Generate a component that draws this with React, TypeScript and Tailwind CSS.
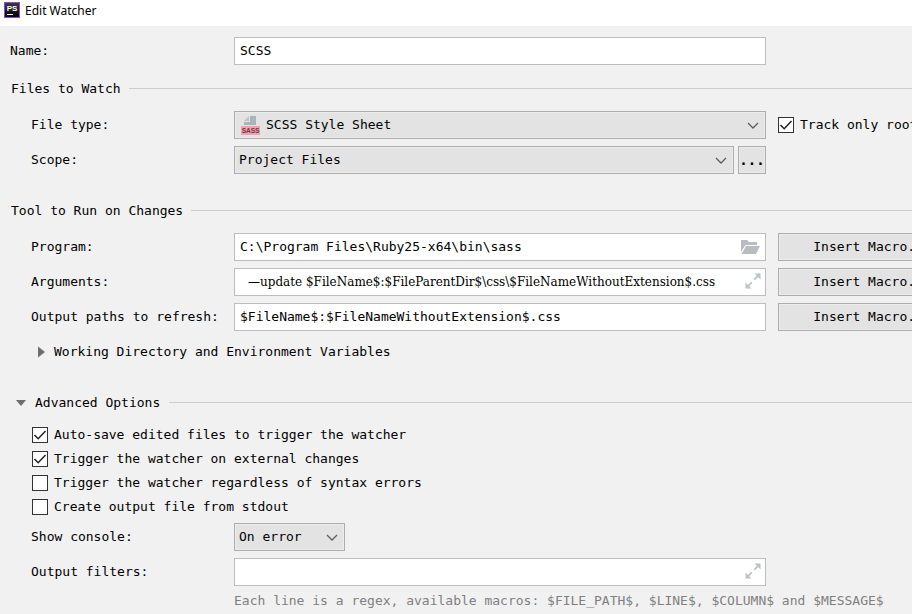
import { useState, type ReactNode } from "react";

const field =
  "h-7 w-full rounded-none border border-[#bdbdbd] bg-white px-[5px] pb-[2px] text-[13px] leading-4 text-black outline-none";
const raised =
  "h-7 rounded-none border border-[#adadad] bg-[#e3e3e3] leading-4 text-black shadow-[inset_0_0_0_1px_#ececec] outline-none";

function AppIcon() {
  return (
    <svg viewBox="0 0 16 16" className="size-4 shrink-0" aria-hidden="true">
      <defs>
        <linearGradient id="tile" x1="0" y1="0" x2="0" y2="1">
          <stop offset="0" stopColor="#3a3a3a" />
          <stop offset="1" stopColor="#000" />
        </linearGradient>
      </defs>
      <rect width="16" height="16" fill="#8a4be0" />
      <rect x="1" y="1" width="14" height="14" fill="url(#tile)" />
      <text x="8" y="9" textAnchor="middle" fontSize="8" fontWeight="700" fill="#fff" fontFamily="Liberation Sans, sans-serif">
        PS
      </text>
      <rect x="3" y="12" width="6" height="1" fill="#fff" />
    </svg>
  );
}

function SassIcon() {
  return (
    <svg viewBox="0 0 19 19" className="h-[19px] w-[19px]" aria-hidden="true">
      <path d="M9 0h6v9H3V6h6z" fill="#a9b4bb" />
      <path d="M3 5l5-5v5z" fill="#bcc5ca" />
      <rect y="10" width="19" height="9" fill="#f2a1af" />
      <text
        x="9.5"
        y="17"
        textAnchor="middle"
        fontSize="6.5"
        fontWeight="700"
        fill="#6b3841"
        fontFamily="Liberation Sans, sans-serif"
      >
        SASS
      </text>
    </svg>
  );
}

function Chevron() {
  return (
    <svg viewBox="0 0 12 8" className="h-2 w-3" fill="none" stroke="#5c5c5c" strokeWidth="1.3" aria-hidden="true">
      <path d="M1 1l5 5 5-5" />
    </svg>
  );
}

function FolderIcon() {
  return (
    <svg viewBox="0 0 19 14" className="h-[14px] w-[19px]" fill="#b7bdc2" aria-hidden="true">
      <path d="M0 0h6l2 2h8v3H4.5L0 12z" />
      <path d="M5 6h14l-4 8H0.5z" />
    </svg>
  );
}

function ExpandIcon() {
  return (
    <svg viewBox="0 0 16 16" className="size-4" fill="#bcc2c6" stroke="#bcc2c6" aria-hidden="true">
      <path d="M9.5 0.5h6v6z" stroke="none" />
      <path d="M0.5 9.5v6h6z" stroke="none" />
      <path d="M9.3 6.7l4-4M6.7 9.3l-4 4" strokeWidth="1.8" />
    </svg>
  );
}

function Row({ id, label, aside, wide, children }: { id: string; label: string; aside?: ReactNode; wide?: boolean; children: ReactNode }) {
  return (
    <div className={wide ? "flex pl-[10px]" : "flex pl-[31px]"}>
      <label htmlFor={id} className={wide ? "w-56 shrink-0 pt-[6px]" : "w-[203px] shrink-0 pt-[6px]"}>
        {label}
      </label>
      <div className="flex min-w-0 flex-1 gap-1">{children}</div>
      <div className="flex h-7 w-[146px] shrink-0 items-center pl-3">{aside}</div>
    </div>
  );
}

function Select({ id, options, icon }: { id: string; options: string[]; icon?: ReactNode }) {
  return (
    <div className="relative min-w-0 flex-1">
      {icon && <span className="pointer-events-none absolute top-[5px] left-[7px]">{icon}</span>}
      <select id={id} className={`${raised} w-full appearance-none ${icon ? "pl-[31px]" : "pl-1"}`}>
        {options.map((o) => (
          <option key={o}>{o}</option>
        ))}
      </select>
      <span className="pointer-events-none absolute top-[11px] right-[7px]">
        <Chevron />
      </span>
    </div>
  );
}

function MacroButton() {
  return (
    <button type="button" className={`${raised} w-[188px] shrink-0 whitespace-nowrap`}>
      Insert Macro...
    </button>
  );
}

function Check({ label, initial = false }: { label: string; initial?: boolean }) {
  const [on, setOn] = useState(initial);
  return (
    <label className="flex h-6 items-center gap-[6px] whitespace-nowrap">
      <span className="relative size-4 shrink-0">
        <input
          type="checkbox"
          checked={on}
          onChange={(e) => setOn(e.target.checked)}
          className="block size-4 appearance-none border border-[#333] bg-white"
        />
        {on && (
          <svg viewBox="0 0 16 16" className="pointer-events-none absolute inset-0 size-4" fill="none" stroke="#222" strokeWidth="1.5" aria-hidden="true">
            <path d="M2.5 8l3.7 3.7L13.5 4" />
          </svg>
        )}
      </span>
      {label}
    </label>
  );
}

function Section({ title }: { title: string }) {
  return (
    <div className="flex h-4 items-center gap-2 pl-[11px]">
      <h2>{title}</h2>
      <span className="mb-0.5 h-px flex-1 bg-[#cdcdcd]" />
    </div>
  );
}

export default function App() {
  return (
    <div className="min-h-screen overflow-x-hidden bg-[#f1f1f1] pb-[5px] font-['DejaVu_Sans_Mono',monospace] text-[13px] leading-4 text-black">
      <header className="flex h-[26px] items-start gap-[5px] bg-white pt-[2px] pl-1">
        <AppIcon />
        <h1 className="font-['Noto_Sans',sans-serif] text-[12px] leading-[17px]">Edit Watcher</h1>
      </header>

      <main className="pt-[11px]">
        <Row id="name" label="Name:" wide>
          <input id="name" defaultValue="SCSS" className={field} />
        </Row>

        <section className="mt-4">
          <Section title="Files to Watch" />
          <div className="mt-[14px] flex flex-col gap-[7px]">
            <Row id="type" label="File type:" aside={<Check label="Track only root files" initial />}>
              <Select id="type" options={["SCSS Style Sheet"]} icon={<SassIcon />} />
            </Row>
            <Row id="scope" label="Scope:">
              <Select id="scope" options={["Project Files", "Open Files"]} />
              <button type="button" aria-label="Choose scope" className={`${raised} w-7 text-[14px] font-bold`}>
                ...
              </button>
            </Row>
          </div>
        </section>

        <section className="mt-[29px]">
          <Section title="Tool to Run on Changes" />
          <div className="mt-[14px] flex flex-col gap-[7px]">
            <Row id="program" label="Program:" aside={<MacroButton />}>
              <div className="relative flex-1">
                <input id="program" defaultValue="C:\Program Files\Ruby25-x64\bin\sass" className={field} />
                <button type="button" aria-label="Browse" className="absolute top-[7px] right-[6px]">
                  <FolderIcon />
                </button>
              </div>
            </Row>
            <Row id="arguments" label="Arguments:" aside={<MacroButton />}>
              <div className="relative flex-1">
                <input
                  id="arguments"
                  defaultValue="—update $FileName$:$FileParentDir$\css\$FileNameWithoutExtension$.css"
                  className="h-7 w-full border border-[#bdbdbd] bg-white pr-6 pl-[13px] font-['DejaVu_Serif',serif] text-[12px] leading-4 outline-none"
                />
                <button type="button" aria-label="Expand arguments" className="absolute top-[5px] right-[5px]">
                  <ExpandIcon />
                </button>
              </div>
            </Row>
            <Row id="output" label="Output paths to refresh:" aside={<MacroButton />}>
              <input id="output" defaultValue="$FileName$:$FileNameWithoutExtension$.css" className={field} />
            </Row>
          </div>
          <button type="button" aria-expanded="false" className="mt-[13px] flex h-4 items-center gap-[9px] pl-[38px]">
            <svg viewBox="0 0 7 12" className="h-3 w-[7px]" fill="#6e6e6e" aria-hidden="true">
              <path d="M0 0.5l7 5.5-7 5.5z" />
            </svg>
            Working Directory and Environment Variables
          </button>
        </section>

        <section className="mt-[35px]">
          <div className="flex h-4 items-center gap-[9px] pl-4">
            <button type="button" aria-expanded="true" className="flex items-center gap-[9px]">
              <svg viewBox="0 0 10 6" className="h-[6px] w-[10px]" fill="#6e6e6e" aria-hidden="true">
                <path d="M0 0h10l-5 6z" />
              </svg>
              Advanced Options
            </button>
            <span className="mb-0.5 h-px flex-1 bg-[#cdcdcd]" />
          </div>
          <div className="mt-3 pl-8">
            <Check label="Auto-save edited files to trigger the watcher" initial />
            <Check label="Trigger the watcher on external changes" initial />
            <Check label="Trigger the watcher regardless of syntax errors" />
            <Check label="Create output file from stdout" />
          </div>
          <div className="mt-1 flex flex-col gap-[7px]">
            <Row id="console" label="Show console:">
              <div className="flex w-[111px]">
                <Select id="console" options={["On error", "Always", "Never"]} />
              </div>
            </Row>
            <Row id="filters" label="Output filters:">
              <div className="relative flex-1">
                <input id="filters" className={field} />
                <button type="button" aria-label="Expand filters" className="absolute top-[5px] right-[5px]">
                  <ExpandIcon />
                </button>
              </div>
            </Row>
          </div>
          <p className="mt-[7px] pl-[234px] whitespace-nowrap text-[#808080]">
            Each line is a regex, available macros: $FILE_PATH$, $LINE$, $COLUMN$ and $MESSAGE$
          </p>
        </section>
      </main>
    </div>
  );
}
